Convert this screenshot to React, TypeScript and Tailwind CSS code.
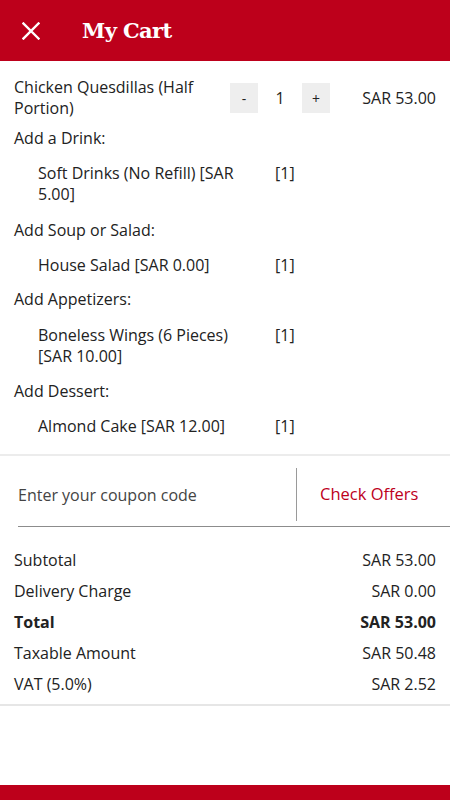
import React from "react";

const font = { fontFamily: '"Open Sans", "Liberation Sans", sans-serif' };

function SubItem({ name, qty, mt = "mt-[14px]" }: { name: string; qty: string; mt?: string }) {
  return (
    <div className={`flex ${mt} pl-[38px]`}>
      <div className="w-[215px] leading-[21px]">{name}</div>
      <div className="ml-[22px] leading-[21px]">{qty}</div>
    </div>
  );
}

function Heading({ children, mt = "mt-[14px]" }: { children: React.ReactNode; mt?: string }) {
  return <div className={`${mt} pl-[14px] leading-[21px]`}>{children}</div>;
}

function Row({ label, value, bold }: { label: string; value: string; bold?: boolean }) {
  return (
    <div className={`flex justify-between h-[31px] items-center ${bold ? "font-bold" : ""}`}>
      <span>{label}</span>
      <span>{value}</span>
    </div>
  );
}

export default function App() {
  return (
    <div className="h-[800px] w-[450px] flex flex-col bg-white text-[16px] text-[#222]" style={font}>
      <header className="h-[61px] bg-[#bd001b] flex items-center shrink-0">
        <div className="w-[82px] flex items-center pl-[22px]">
          <svg width="18" height="18" viewBox="0 0 18 18">
            <path d="M1.5 1.5 L16.5 16.5 M16.5 1.5 L1.5 16.5" stroke="#fff" strokeWidth="2.4" strokeLinecap="square" />
          </svg>
        </div>
        <h1
          className="text-white text-[21px] font-bold tracking-[-0.6px]"
          style={{ fontFamily: '"DejaVu Serif", "Liberation Serif", serif' }}
        >
          My Cart
        </h1>
      </header>

      <section className="pt-[16px] pb-[17px] border-b-2 border-[#ececec]">
        <div className="flex items-center pl-[14px] pr-[14px]">
          <div className="w-[210px] leading-[21px]">Chicken Quesdillas (Half Portion)</div>
          <div className="ml-[6px] w-[28px] h-[30px] bg-[#eeeeee] flex items-center justify-center text-[14px] text-[#222]">-</div>
          <div className="w-[44px] text-center">1</div>
          <div className="w-[28px] h-[30px] bg-[#eeeeee] flex items-center justify-center text-[14px] text-[#222]">+</div>
          <div className="flex-1 text-right">SAR 53.00</div>
        </div>
        <Heading mt="mt-[9px]">Add a Drink:</Heading>
        <SubItem name="Soft Drinks (No Refill) [SAR 5.00]" qty="[1]" />
        <Heading mt="mt-[15px]">Add Soup or Salad:</Heading>
        <SubItem name="House Salad [SAR 0.00]" qty="[1]" />
        <Heading mt="mt-[13px]">Add Appetizers:</Heading>
        <SubItem name="Boneless Wings (6 Pieces) [SAR 10.00]" qty="[1]" mt="mt-[15px]" />
        <Heading mt="mt-[14px]">Add Dessert:</Heading>
        <SubItem name="Almond Cake [SAR 12.00]" qty="[1]" />
      </section>

      <section className="pl-[18px]">
        <div className="flex items-center h-[71px] border-b border-[#8c8c8c]">
          <div className="flex-1 text-[16px] text-[#444] pt-[7px]">Enter your coupon code</div>
          <div className="w-px self-stretch bg-[#9a9a9a] mt-[12px] mb-[5px]" />
          <div className="w-[153px] pl-[23px] pt-[7px] text-[#bd001b] text-[16.5px]">Check Offers</div>
        </div>
      </section>

      <section className="pt-[17px] pb-[5px] px-[14px] border-b-2 border-[#e6e6e6]">
        <Row label="Subtotal" value="SAR 53.00" />
        <Row label="Delivery Charge" value="SAR 0.00" />
        <Row label="Total" value="SAR 53.00" bold />
        <Row label="Taxable Amount" value="SAR 50.48" />
        <Row label="VAT (5.0%)" value="SAR 2.52" />
      </section>

      <div className="mt-auto h-[15px] bg-[#bd001b] shrink-0" />
    </div>
  );
}
